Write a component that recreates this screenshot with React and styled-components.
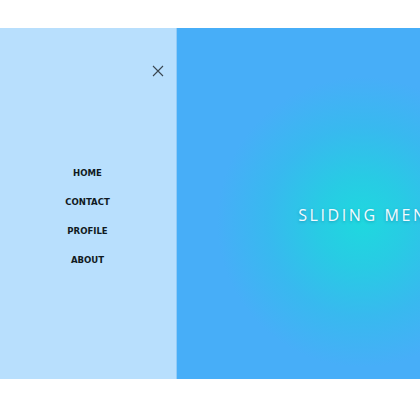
import React from "react";
import styled, { createGlobalStyle } from "styled-components";

const Global = createGlobalStyle`
  html, body { margin: 0; padding: 0; background: #ffffff; }
  body { overflow: hidden; width: 420px; height: 420px; }
`;

const Page = styled.div`
  margin-top: 28px;
  width: 420px;
  height: 351px;
  overflow: hidden;
  display: flex;
`;

const Sidebar = styled.nav`
  position: relative;
  flex: 0 0 177px;
  background: #b8dffd;
  border-right: 1px solid #93cbf6;
  display: flex;
  flex-direction: column;
  align-items: center;
  justify-content: center;
  padding-top: 24px;
  padding-right: 1px;
  box-sizing: border-box;
`;

const Close = styled.button`
  position: absolute;
  top: 37px;
  left: 152px;
  width: 12px;
  height: 12px;
  padding: 0;
  border: none;
  background: transparent;
  display: flex;
`;

const MenuList = styled.ul`
  list-style: none;
  margin: 0;
  padding: 0;
  display: flex;
  flex-direction: column;
  align-items: center;
  gap: 16px;
`;

const MenuItem = styled.li`
  font-family: "DejaVu Sans Condensed", "Liberation Sans", Arial, sans-serif;
  font-weight: bold;
  font-size: 9.5px;
  line-height: 13px;
  color: #111a22;
  letter-spacing: 0;
`;

const Main = styled.main`
  flex: 0 0 384px;
  background: radial-gradient(circle at 185px 194px, #1fd8df 0px, #28cbe4 45px, #38b9ef 95px, #47aef8 145px);
  display: flex;
  align-items: center;
  justify-content: center;
`;

const Title = styled.h1`
  margin: 22px 0 0 0;
  padding-left: 2px;
  font-family: "Open Sans", "Noto Sans", sans-serif;
  font-weight: 400;
  font-size: 16px;
  letter-spacing: 2.6px;
  color: #f4fbff;
  text-shadow: 0 1px 3px rgba(0, 60, 110, 0.35);
  white-space: nowrap;
`;

export default function App() {
  return (
    <>
      <Global />
      <Page>
        <Sidebar>
          <Close aria-label="close">
            <svg width="12" height="12" viewBox="0 0 12 12">
              <path d="M1 1 L11 11 M11 1 L1 11" stroke="#3a4650" strokeWidth="1.1" fill="none" />
            </svg>
          </Close>
          <MenuList>
            <MenuItem>HOME</MenuItem>
            <MenuItem>CONTACT</MenuItem>
            <MenuItem>PROFILE</MenuItem>
            <MenuItem>ABOUT</MenuItem>
          </MenuList>
        </Sidebar>
        <Main>
          <Title>SLIDING MENU</Title>
        </Main>
      </Page>
    </>
  );
}
